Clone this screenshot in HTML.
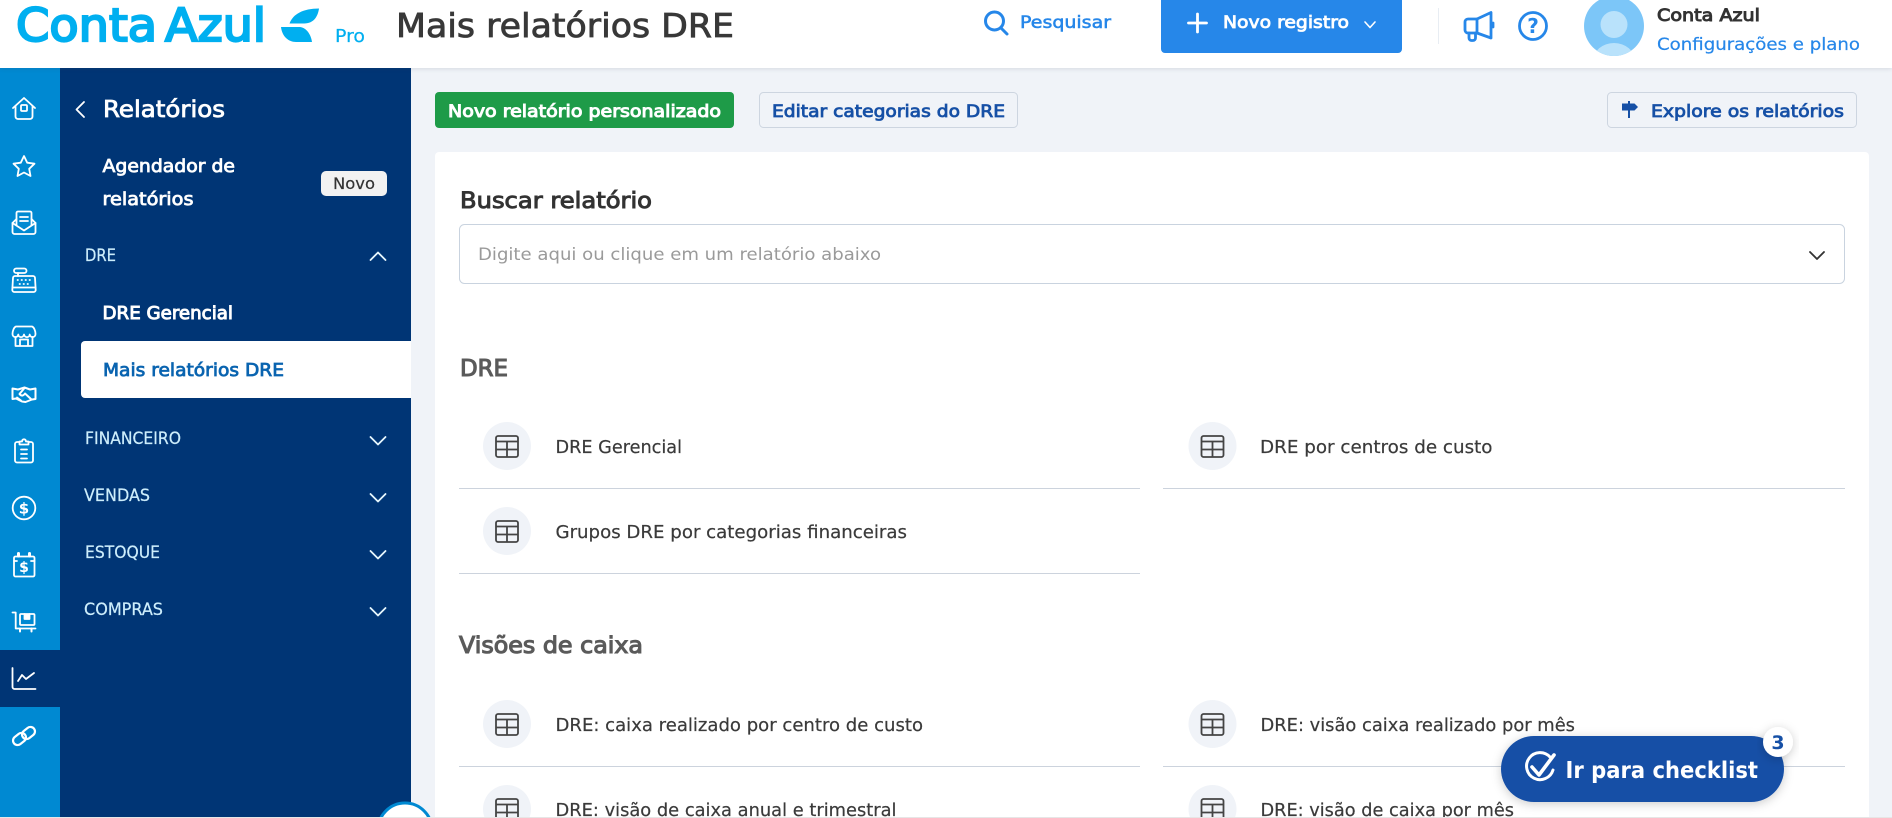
<!DOCTYPE html>
<html lang="pt-BR">
<head>
<meta charset="utf-8">
<title>Mais relatórios DRE</title>
<style>
html,body{margin:0;padding:0;width:1892px;height:818px;overflow:hidden;background:#f0f3f8}
body{position:relative}
header,nav,main,aside{position:absolute;display:block}
svg{display:block;overflow:hidden}
text{font-family:"DejaVu Sans","Liberation Sans",sans-serif;white-space:pre}
header{left:0;top:0;width:1892px;height:68px;background:#fff;box-shadow:0 1px 4px rgba(60,70,90,.14);z-index:2}
nav{left:0;top:68px;width:411px;height:750px;background:#003575;z-index:1}
main{left:411px;top:68px;width:1481px;height:750px;background:#f0f3f8}
aside{left:1480px;top:715px;width:330px;height:103px;z-index:3}
.strip{position:absolute;left:0;top:817px;width:1892px;height:1px;background:#e6e6e6;z-index:5}
.l{stroke-width:.2px}
.m{stroke-width:.55px}
.s{stroke-width:.8px}
.h{stroke-width:.95px}
.ic{fill:none;stroke:#fff;stroke-width:1.8;stroke-linecap:round;stroke-linejoin:round}
</style>
</head>
<body>

<header>
<svg width="1892" height="68" viewBox="0 0 1892 68">
  <text x="16" y="41" font-size="45" fill="#00aff0" stroke="#00aff0" stroke-width="2.200" textLength="141" lengthAdjust="spacingAndGlyphs">Conta</text>
  <text x="165" y="41" font-size="45" fill="#00aff0" stroke="#00aff0" stroke-width="2.200" textLength="101" lengthAdjust="spacingAndGlyphs">Azul</text>
  <path d="M289.500 23.500C293 14 303 8.500 319 8.500C318 16 314 23.500 304 23.500Z" fill="#00aff0"/>
  <path d="M281 27H300C307 28 311 35 312 42H296C288 42 282 36 281 27Z" fill="#00aff0"/>
  <text class="l" x="335" y="42" font-size="18" fill="#00aff0" stroke="#00aff0" textLength="30" lengthAdjust="spacingAndGlyphs">Pro</text>
  <text x="396" y="37" font-size="33" fill="#383838" stroke="#383838" stroke-width=".8" textLength="338" lengthAdjust="spacingAndGlyphs">Mais relatórios DRE</text>

  <g fill="none" stroke="#2687e9" stroke-width="3" stroke-linecap="round">
    <circle cx="994.500" cy="21" r="9"/>
    <path d="M1001 28L1007 34"/>
  </g>
  <text class="m" x="1020" y="28" font-size="17" fill="#2687e9" stroke="#2687e9" textLength="91" lengthAdjust="spacingAndGlyphs">Pesquisar</text>

  <path d="M1161 0H1402V49a4 4 0 0 1-4 4H1165a4 4 0 0 1-4-4Z" fill="#2687e9"/>
  <path d="M1197.500 14V32M1188.500 23H1206.500" stroke="#fff" stroke-width="2.800" stroke-linecap="round"/>
  <text class="s" x="1223" y="28" font-size="17" fill="#fff" stroke="#fff" textLength="126" lengthAdjust="spacingAndGlyphs">Novo registro</text>
  <path d="M1365 22L1370 27.500L1375 22" fill="none" stroke="#fff" stroke-width="1.600" stroke-linecap="round" stroke-linejoin="round"/>

  <rect x="1438" y="8" width="1" height="36" fill="#e8edf3"/>

  <g fill="none" stroke="#2687e9" stroke-width="2.800" stroke-linejoin="round" stroke-linecap="round">
    <path d="M1477 19H1468a3 3 0 0 0-3 3V30a3 3 0 0 0 3 3H1477Z"/>
    <path d="M1477 19L1491 12.500V38L1477 33"/>
    <path d="M1469 33V38a2.500 2.500 0 0 0 2.500 2.500H1473a2.500 2.500 0 0 0 2.500-2.500V33"/>
    <path d="M1493 23V27"/>
    <circle cx="1533" cy="26" r="13.500"/>
  </g>
  <text x="1533" y="33" font-size="20" font-weight="700" fill="#2687e9" text-anchor="middle">?</text>

  <clipPath id="av"><circle cx="1614" cy="26" r="30"/></clipPath>
  <g clip-path="url(#av)">
    <rect x="1584" y="-4" width="60" height="60" fill="#7cc6f8"/>
    <circle cx="1614" cy="24.500" r="13.500" fill="#b9e2fb"/>
    <ellipse cx="1614" cy="61" rx="21" ry="18" fill="#b9e2fb"/>
  </g>

  <text class="h" x="1657" y="21" font-size="17" fill="#333" stroke="#333" textLength="103" lengthAdjust="spacingAndGlyphs">Conta Azul</text>
  <text class="l" x="1657" y="50" font-size="17" fill="#2687e9" stroke="#2687e9" textLength="203" lengthAdjust="spacingAndGlyphs">Configurações e plano</text>
</svg>
</header>

<nav>
<svg width="411" height="750" viewBox="0 68 411 750">
  <rect x="0" y="68" width="60" height="750" fill="#0089d2"/>
  <rect x="0" y="650" width="60" height="57" fill="#003575"/>

  <g class="ic">
    <!-- home -->
    <path d="M13 108L24 98L35 108M15.500 106V116.500a2.500 2.500 0 0 0 2.500 2.500H30a2.500 2.500 0 0 0 2.500-2.500V106"/>
    <rect x="21" y="105" width="6" height="6" rx="1"/>
    <!-- star -->
    <path d="M24 156L27.200 162.700L34.500 163.700L29.200 168.800L30.500 176L24 172.500L17.500 176L18.800 168.800L13.500 163.700L20.800 162.700Z"/>
    <!-- inbox -->
    <path d="M16.500 219L12.500 223V232a2 2 0 0 0 2 2H33.500a2 2 0 0 0 2-2V223L31.500 219"/>
    <path d="M12.500 223L24 230.500L35.500 223"/>
    <path d="M16.500 225V213a1.500 1.500 0 0 1 1.500-1.500H30a1.500 1.500 0 0 1 1.500 1.500V225"/>
    <path d="M20 217H28M20 221H28"/>
    <!-- register -->
    <rect x="14" y="268.500" width="12.500" height="4.500" rx="2.200"/>
    <path d="M18 273V276"/>
    <path d="M15 276H33a2 2 0 0 1 2 2L35.700 290a2 2 0 0 1-2 2H14.300a2 2 0 0 1-2-2L13 278a2 2 0 0 1 2-2Z"/>
    <path d="M12.500 287.500H35.500"/>
    <path d="M17.500 280H18M21.500 280H22M25.500 280H26M29.500 280H30M19.500 284H20M23.500 284H24M27.500 284H28" stroke-width="1.700"/>
    <!-- store -->
    <path d="M16 326.500H32C34 327 35.500 331 35.500 334C35.500 338 30 338 29.700 334.500C29.500 338 24.500 338 24 334.500C23.500 338 18.500 338 18.300 334.500C18 338 12.500 338 12.500 334C12.500 331 14 327 16 326.500Z"/>
    <path d="M15.500 337V346H32.500V337M20 346V339.500H28V346"/>
    <!-- handshake -->
    <path d="M12.500 388.500L18 389.500L24.500 387.500L30 389.500L35.500 388.500V399L32 399.500L25.500 402L22 401.500L16 398.500L12.500 399Z" stroke-width="2"/>
    <path d="M24.500 388L19.500 394C22 397 24 395 25 393.500L31.500 399.500" stroke-width="2"/>
    <path d="M17 397.500L21 400.500"/>
    <!-- clipboard -->
    <path d="M19.500 442H17a2 2 0 0 0-2 2V460.500a2 2 0 0 0 2 2H31a2 2 0 0 0 2-2V444a2 2 0 0 0-2-2H28.500"/>
    <path d="M19.500 444.500V441.500H22C22.300 438.500 25.700 438.500 26 441.500H28.500V444.500Z"/>
    <path d="M21 449.500H27M21 454H27M21 458.500H27"/>
    <!-- dollar -->
    <circle cx="24" cy="508" r="11.300"/>
    <!-- calendar -->
    <rect x="14" y="556.500" width="20.500" height="20" rx="1.500"/>
    <path d="M18.500 553.500V556M29.500 553.500V556" stroke-width="3"/>
    <path d="M14 561H17M31 561H34.500"/>
    <!-- cart box -->
    <path d="M12.500 612.500H15.700V628.500H35.500"/>
    <rect x="20" y="614" width="14.500" height="11" rx="1"/>
    <path d="M24.500 614V619H29.500V614" fill="#fff"/>
    <path d="M20 628.500V631.500M31.500 628.500V631.500" stroke-width="2"/>
    <!-- chart -->
    <path d="M12.500 668V687a2 2 0 0 0 2 2H35.500"/>
    <path d="M18 681L22 675L26 679L34 673"/>
    <!-- link -->
    <rect x="12.500" y="734.500" width="14" height="9" rx="4.500" transform="rotate(-38 19.500 739)" stroke-width="2.200"/>
    <rect x="21.500" y="728.500" width="14" height="9" rx="4.500" transform="rotate(-38 28.500 733)" stroke-width="2.200"/>
  </g>
  <text x="24" y="513.500" font-size="15" font-weight="700" fill="#fff" text-anchor="middle">$</text>
  <text x="24" y="572" font-size="14" font-weight="700" fill="#fff" text-anchor="middle">$</text>

  <path d="M84 102L76.500 109.500L84 117" fill="none" stroke="#fff" stroke-width="1.800" stroke-linecap="round" stroke-linejoin="round"/>
  <text class="s" x="103" y="117" font-size="23" fill="#fff" stroke="#fff" textLength="122" lengthAdjust="spacingAndGlyphs">Relatórios</text>

  <text class="s" x="102.500" y="172" font-size="18" fill="#fff" stroke="#fff" textLength="132.500" lengthAdjust="spacingAndGlyphs">Agendador de</text>
  <text class="s" x="102.500" y="205" font-size="18" fill="#fff" stroke="#fff" textLength="91" lengthAdjust="spacingAndGlyphs">relatórios</text>
  <rect x="321" y="171" width="66" height="25" rx="5" fill="#f2f2f2"/>
  <text class="l" x="333" y="189" font-size="16" fill="#333" stroke="#333" textLength="42" lengthAdjust="spacingAndGlyphs">Novo</text>

  <text class="l" x="85" y="261" font-size="16.500" fill="#cdeefc" stroke="#cdeefc" textLength="31" lengthAdjust="spacingAndGlyphs">DRE</text>
  <path d="M370.500 260L378 252.500L385.500 260" fill="none" stroke="#e6f6fd" stroke-width="1.800" stroke-linecap="round" stroke-linejoin="round"/>

  <text class="h" x="102.500" y="319" font-size="18" fill="#fff" stroke="#fff" textLength="130.500" lengthAdjust="spacingAndGlyphs">DRE Gerencial</text>

  <path d="M85 341H411V398H85a4 4 0 0 1-4-4V345a4 4 0 0 1 4-4Z" fill="#fff"/>
  <text class="s" x="103" y="376" font-size="18" fill="#0a64b0" stroke="#0a64b0" textLength="181" lengthAdjust="spacingAndGlyphs">Mais relatórios DRE</text>

  <g fill="#cdeefc" stroke="#cdeefc" font-size="16.500">
    <text class="l" x="85" y="444" textLength="96" lengthAdjust="spacingAndGlyphs">FINANCEIRO</text>
    <text class="l" x="84" y="501" textLength="66" lengthAdjust="spacingAndGlyphs">VENDAS</text>
    <text class="l" x="85" y="558" textLength="75" lengthAdjust="spacingAndGlyphs">ESTOQUE</text>
    <text class="l" x="84" y="615" textLength="79" lengthAdjust="spacingAndGlyphs">COMPRAS</text>
  </g>
  <g fill="none" stroke="#e6f6fd" stroke-width="1.800" stroke-linecap="round" stroke-linejoin="round">
    <path d="M370.500 437L378 444.500L385.500 437"/>
    <path d="M370.500 494L378 501.500L385.500 494"/>
    <path d="M370.500 551L378 558.500L385.500 551"/>
    <path d="M370.500 608L378 615.500L385.500 608"/>
  </g>
</svg>
</nav>

<main>
<svg width="1481" height="750" viewBox="411 68 1481 750">
  <defs>
    <symbol id="tb" viewBox="0 0 48 48" width="48" height="48">
      <circle cx="24" cy="24" r="24" fill="#f0f3f8"/>
      <rect x="13" y="14" width="22" height="21" rx="2" fill="none" stroke="#444" stroke-width="1.800"/>
      <path d="M13 19.500H35M13 27.500H35M24 19.500V35" fill="none" stroke="#444" stroke-width="1.800"/>
    </symbol>
  </defs>

  <rect x="435" y="92" width="299" height="36" rx="4" fill="#1e9b48"/>
  <text class="h" x="448" y="117" font-size="16.500" fill="#fff" stroke="#fff" textLength="273" lengthAdjust="spacingAndGlyphs">Novo relatório personalizado</text>

  <rect x="759.500" y="92.500" width="258" height="35" rx="4" fill="#f0f3f8" stroke="#cdd5e0"/>
  <text class="s" x="772" y="117" font-size="16.500" fill="#1650a6" stroke="#1650a6" textLength="233" lengthAdjust="spacingAndGlyphs">Editar categorias do DRE</text>

  <rect x="1607.500" y="92.500" width="249" height="35" rx="4" fill="#f0f3f8" stroke="#cdd5e0"/>
  <path d="M1622 103.500H1634.500L1638 107L1634.500 110.500H1622Z" fill="#1650a6"/>
  <path d="M1629 101V118" stroke="#1650a6" stroke-width="2"/>
  <text class="s" x="1651" y="117" font-size="16.500" fill="#1650a6" stroke="#1650a6" textLength="193" lengthAdjust="spacingAndGlyphs">Explore os relatórios</text>

  <path d="M439 152H1865a4 4 0 0 1 4 4V818H435V156a4 4 0 0 1 4-4Z" fill="#fff"/>

  <text class="h" x="460" y="208" font-size="22" fill="#333" stroke="#333" textLength="192" lengthAdjust="spacingAndGlyphs">Buscar relatório</text>
  <rect x="459.500" y="224.500" width="1385" height="59" rx="5" fill="#fff" stroke="#c9d3df"/>
  <text x="478" y="260" font-size="17" fill="#9a9a9a" textLength="403" lengthAdjust="spacingAndGlyphs">Digite aqui ou clique em um relatório abaixo</text>
  <path d="M1810 252L1817 259L1824 252" fill="none" stroke="#333" stroke-width="1.800" stroke-linecap="round" stroke-linejoin="round"/>

  <text x="460" y="376" font-size="23" fill="#5a5a5a" stroke="#5a5a5a" stroke-width="1.100" textLength="48" lengthAdjust="spacingAndGlyphs">DRE</text>

  <use href="#tb" x="483" y="422"/>
  <text class="l" x="555.500" y="453" font-size="17.500" fill="#3a3a3a" stroke="#3a3a3a" textLength="126.500" lengthAdjust="spacingAndGlyphs">DRE Gerencial</text>
  <rect x="459" y="488" width="681" height="1" fill="#ccd3dd"/>

  <use href="#tb" x="1188.500" y="422"/>
  <text class="l" x="1260" y="453" font-size="17.500" fill="#3a3a3a" stroke="#3a3a3a" textLength="232.500" lengthAdjust="spacingAndGlyphs">DRE por centros de custo</text>
  <rect x="1163" y="488" width="682" height="1" fill="#ccd3dd"/>

  <use href="#tb" x="483" y="507"/>
  <text class="l" x="555.500" y="538" font-size="17.500" fill="#3a3a3a" stroke="#3a3a3a" textLength="351.500" lengthAdjust="spacingAndGlyphs">Grupos DRE por categorias financeiras</text>
  <rect x="459" y="573" width="681" height="1" fill="#ccd3dd"/>

  <text x="459" y="653" font-size="23" fill="#5a5a5a" stroke="#5a5a5a" stroke-width="1.100" textLength="184" lengthAdjust="spacingAndGlyphs">Visões de caixa</text>

  <use href="#tb" x="483" y="700"/>
  <text class="l" x="555.500" y="731" font-size="17.500" fill="#3a3a3a" stroke="#3a3a3a" textLength="367.500" lengthAdjust="spacingAndGlyphs">DRE: caixa realizado por centro de custo</text>
  <rect x="459" y="766" width="681" height="1" fill="#ccd3dd"/>

  <use href="#tb" x="1188.500" y="700"/>
  <text class="l" x="1260.500" y="731" font-size="17.500" fill="#3a3a3a" stroke="#3a3a3a" textLength="314.500" lengthAdjust="spacingAndGlyphs">DRE: visão caixa realizado por mês</text>
  <rect x="1163" y="766" width="682" height="1" fill="#ccd3dd"/>

  <use href="#tb" x="483" y="785"/>
  <text class="l" x="555.500" y="816" font-size="17.500" fill="#3a3a3a" stroke="#3a3a3a" textLength="341" lengthAdjust="spacingAndGlyphs">DRE: visão de caixa anual e trimestral</text>

  <use href="#tb" x="1188.500" y="785"/>
  <text class="l" x="1260.500" y="816" font-size="17.500" fill="#3a3a3a" stroke="#3a3a3a" textLength="253.500" lengthAdjust="spacingAndGlyphs">DRE: visão de caixa por mês</text>
</svg>
</main>

<svg style="position:absolute;left:370px;top:795px;z-index:4" width="70" height="23" viewBox="370 795 70 23">
  <circle cx="405" cy="830" r="27" fill="#fff" stroke="#0089d2" stroke-width="3"/>
</svg>

<aside>
<svg width="330" height="103" viewBox="1480 715 330 103">
  <defs>
    <filter id="sh" x="-20%" y="-40%" width="140%" height="180%">
      <feDropShadow dx="0" dy="2" stdDeviation="5" flood-color="#000" flood-opacity=".2"/>
    </filter>
  </defs>
  <rect x="1501" y="736" width="283" height="66" rx="33" fill="#1650a6" filter="url(#sh)"/>
  <path d="M1550 757A13.500 13.500 0 1 0 1553 770" fill="none" stroke="#fff" stroke-width="3" stroke-linecap="round"/>
  <path d="M1532 767L1539 775L1554 755" fill="none" stroke="#fff" stroke-width="3.600" stroke-linecap="round" stroke-linejoin="round"/>
  <text x="1565.500" y="778" font-size="23" font-weight="700" fill="#fff" textLength="192.500" lengthAdjust="spacingAndGlyphs">Ir para checklist</text>
  <circle cx="1778" cy="742" r="15" fill="#fff" filter="url(#sh)"/>
  <text x="1778" y="749" font-size="19" font-weight="700" fill="#1650a6" text-anchor="middle">3</text>
</svg>
</aside>

<div class="strip"></div>
</body>
</html>
